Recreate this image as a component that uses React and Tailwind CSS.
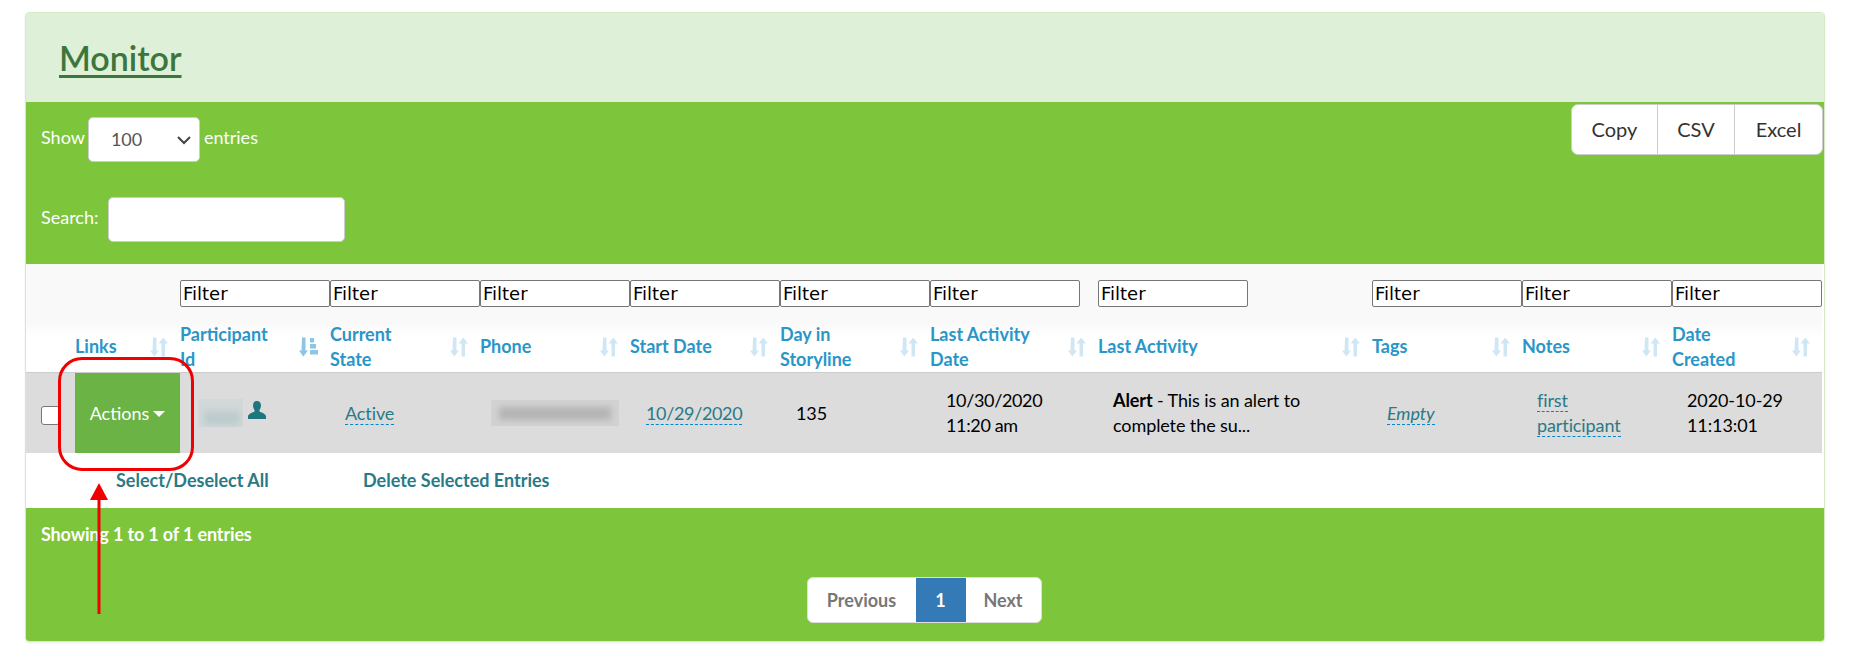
const filterCols = [false, false, true, true, true, true, true, true, 'gap', true, true, true];

const headers = [
  { w: 'w-[49px]', label: '' },
  { w: 'w-[105px]', label: ['Links'] },
  { w: 'w-[150px]', label: ['Participant', 'Id'], sorted: true },
  { w: 'w-[150px]', label: ['Current', 'State'] },
  { w: 'w-[150px]', label: ['Phone'] },
  { w: 'w-[150px]', label: ['Start Date'] },
  { w: 'w-[150px]', label: ['Day in', 'Storyline'] },
  { w: 'w-[168px]', label: ['Last Activity', 'Date'] },
  { w: 'w-[274px]', label: ['Last Activity'] },
  { w: 'w-[150px]', label: ['Tags'] },
  { w: 'w-[150px]', label: ['Notes'] },
  { w: 'w-[150px]', label: ['Date', 'Created'] },
];

function SortIcon() {
  return (
    <svg width="18" height="20" viewBox="0 0 18 20" className="absolute right-[12px] top-1/2 -translate-y-1/2 fill-[#cfe7f4]">
      <path d="M3 0.500h3.500v13h2.500l-4.750 6-4.250-6h2.500z" />
      <path d="M11.500 19.500h3.500v-13h3l-4.750-6-4.750 6h3z" />
    </svg>
  );
}

function SortedIcon() {
  return (
    <svg width="19" height="20" viewBox="0 0 19 20" className="absolute right-[12px] top-1/2 -translate-y-1/2 fill-[#8cc6e4]">
      <path d="M3 0.500h3.500v13h2.500l-4.750 6-4.250-6h2.500z" />
      <path d="M11 1h4v4.500h-4zM11 7h6v4.500h-6zM11 13h8v4.500h-8z" />
    </svg>
  );
}

function Editable({ children, className = '' }) {
  return (
    <span className={`border-b border-dashed border-[#0088cc] text-[#2a7a86] ${className}`}>{children}</span>
  );
}

export default function App() {
  return (
    <div className="relative h-[662px] bg-white pl-[25px] pt-[12px] font-['Lato','Noto_Sans',sans-serif] text-[18px] leading-[25px] text-black">
      <div className="w-[1800px] overflow-hidden rounded-[4px] border border-[#d6e9c6] shadow-[0_1px_2px_rgba(0,0,0,0.08)]">
        <div className="flex h-[89px] items-center bg-[#dff0d8] pl-[33px]">
          <h1 className="text-[34px] font-semibold leading-[40px] text-[#3c763d] underline decoration-[3px] underline-offset-[4px]">Monitor</h1>
        </div>

        <div className="flex h-[162px] justify-between bg-[#7dc53b] pl-[15px] pr-[1px] pt-[15px] text-white">
          <div>
            <div className="flex h-[45px] items-center">
              <span className="mt-[-4px]">Show</span>
              <div className="relative ml-[3px] mr-[4px] flex h-[45px] w-[112px] items-center rounded-[5px] border border-[#ccc] bg-white pl-[22px] text-[#555]">
                100
                <svg width="14" height="14" viewBox="0 0 14 14" className="absolute right-[8px] top-[15px] fill-none stroke-[#444] stroke-2">
                  <path d="M1 4l6 6 6-6" />
                </svg>
              </div>
              <span className="mt-[-4px]">entries</span>
            </div>
            <div className="mt-[35px] flex h-[45px] items-center">
              <span className="mt-[-4px]">Search:</span>
              <div className="ml-[10px] h-[45px] w-[237px] rounded-[5px] border border-[#ccc] bg-white" />
            </div>
          </div>
          <div className="mt-[-13px] flex h-[51px] rounded-[7px] border border-[#ccc] bg-white text-[20px] text-[#333]">
            <div className="flex w-[86px] items-center justify-center border-r border-[#ccc]">Copy</div>
            <div className="flex w-[77px] items-center justify-center border-r border-[#ccc]">CSV</div>
            <div className="flex w-[87px] items-center justify-center">Excel</div>
          </div>
        </div>

        <table className="w-[1796px] table-fixed border-collapse">
          <thead>
            <tr className="h-[58px] bg-[#f9f9f9]">
              {filterCols.map((f, i) => (
                <th key={i} className={`${headers[i].w} p-0 pt-[1px] font-normal`}>
                  {f && (
                    <input
                      readOnly
                      value="Filter"
                      className="block h-[27px] w-[150px] rounded-[2px] border border-[#767676] bg-white px-[2px] font-['DejaVu_Sans',sans-serif] text-[18px] leading-[25px] text-black"
                    />
                  )}
                </th>
              ))}
            </tr>
            <tr className="h-[50px] border-b border-[#ccc] bg-gradient-to-b from-[#f9f9f9] to-white to-30%">
              {headers.map((h, i) => (
                <th key={i} className="relative p-0 text-left align-middle font-bold text-[#2a96c8]">
                  {h.label && h.label.length === 1 && <div className="mt-[-2px]">{h.label[0]}</div>}
                  {h.label && h.label.length > 1 && h.label.map((l) => <div key={l}>{l}</div>)}
                  {h.label && (h.sorted ? <SortedIcon /> : <SortIcon />)}
                </th>
              ))}
            </tr>
          </thead>
          <tbody className="tracking-[-0.1px]">
            <tr className="h-[80px] bg-[#dcdcdc]">
              <td className="p-0 pl-[15px]">
                <div className="mt-[4px] h-[19px] w-[19px] rounded-[3px] border border-[#777] bg-white" />
              </td>
              <td className="h-[80px] p-0">
                <div className="flex h-[80px] w-[105px] items-center justify-center gap-[4px] bg-[#6ab344] tracking-normal text-white">
                  Actions
                  <span className="mt-[2px] border-x-[6px] border-t-[6px] border-x-transparent border-t-white" />
                </div>
              </td>
              <td className="p-0 pl-[18px]">
                <div className="flex items-center gap-[5px]">
                  <div className="h-[28px] w-[45px] overflow-hidden bg-[#d2d8d8]">
                    <div className="mx-[6px] mt-[12px] h-[14px] w-[36px] bg-[#bccbce] blur-[3px]" />
                  </div>
                  <svg width="18" height="18" viewBox="0 0 18 18" className="mb-[6px] fill-[#20767f]">
                    <path d="M9 0c2.600 0 4 2 4 4.600 0 1.800-.7 3.400-1.500 4.400v1.500c1.500 1 6.500 2.300 6.500 5v2.500H0v-2.500c0-2.700 5-4 6.500-5V9C5.700 8 5 6.400 5 4.600 5 2 6.400 0 9 0z" />
                  </svg>
                </div>
              </td>
              <td className="p-0 pl-[15px]"><Editable>Active</Editable></td>
              <td className="p-0 pl-[11px]">
                <div className="h-[26px] w-[128px] overflow-hidden bg-[#d2d2d2]">
                  <div className="mx-[8px] mt-[7px] h-[13px] w-[112px] bg-[#b4b4b4] blur-[3px]" />
                </div>
              </td>
              <td className="p-0 pl-[16px] tracking-[-0.35px]"><Editable>10/29/2020</Editable></td>
              <td className="p-0 pl-[16px]">135</td>
              <td className="p-0 pl-[16px] tracking-[-0.35px]">10/30/2020<br />11:20 am</td>
              <td className="p-0 pl-[15px]"><b className="font-bold">Alert</b> - This is an alert to<br />complete the su...</td>
              <td className="p-0 pl-[15px]"><Editable className="italic">Empty</Editable></td>
              <td className="p-0 pl-[15px]"><Editable>first</Editable><br /><Editable>participant</Editable></td>
              <td className="p-0 pl-[15px]">2020-10-29<br />11:13:01</td>
            </tr>
          </tbody>
        </table>

        <div className="flex h-[55px] items-center bg-white pl-[90px] font-bold text-[#2a7a86]">
          <span className="w-[247px]">Select/Deselect All</span>
          <span>Delete Selected Entries</span>
        </div>

        <div className="flex h-[133px] flex-col bg-[#7dc53b] pl-[15px] pt-[14px]">
          <div className="font-bold tracking-[-0.15px] text-white">Showing 1 to 1 of 1 entries</div>
          <div className="mt-[30px] flex justify-center pr-[17px]">
            <div className="flex h-[46px] overflow-hidden rounded-[6px] border border-[#ddd] bg-white font-bold text-[#777]">
              <div className="flex w-[108px] items-center justify-center">Previous</div>
              <div className="flex w-[50px] items-center justify-center bg-[#337ab7] text-white">1</div>
              <div className="flex w-[75px] items-center justify-center">Next</div>
            </div>
          </div>
        </div>
      </div>

      {/* red annotation over the actions button */}
      <div className="absolute left-[58px] top-[357px] h-[114px] w-[136px] rounded-[24px] border-[3px] border-[#f00000]" />
      <svg width="20" height="132" viewBox="0 0 20 132" className="absolute left-[89px] top-[483px] fill-[#f00000]">
        <path d="M10 0l9 17H1z" />
        <path d="M8.500 16h3v115h-3z" />
      </svg>
    </div>
  );
}
